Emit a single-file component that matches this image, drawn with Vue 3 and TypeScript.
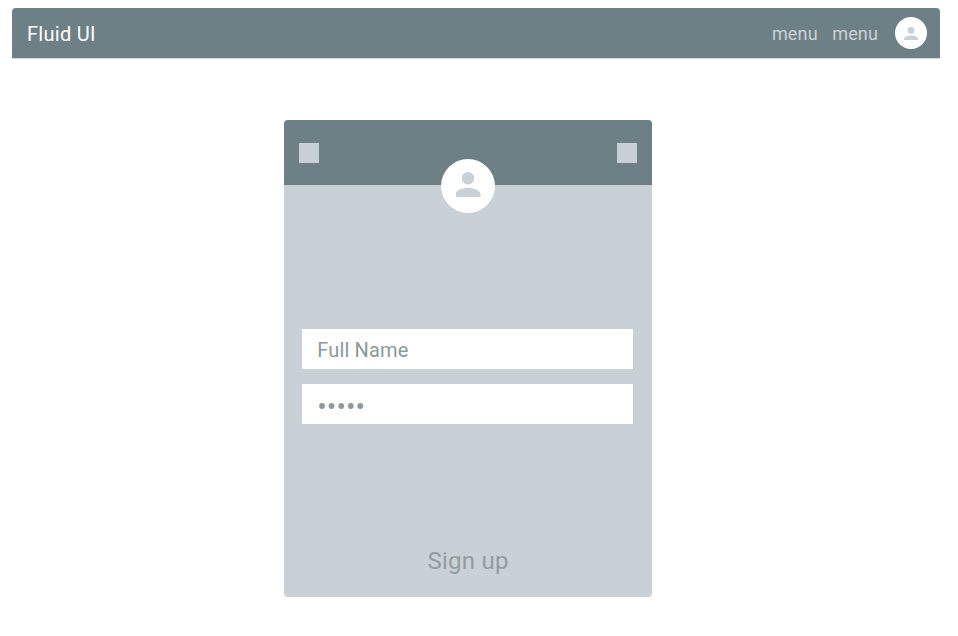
<script setup lang="ts">
import { ref } from 'vue'

const menuItems: string[] = ['menu', 'menu']
const fullName = ref('')
const password = ref('fluid')
</script>

<template>
  <div class="page">
    <header class="topbar">
      <div class="brand">Fluid UI</div>
      <nav class="menu">
        <a v-for="(item, index) in menuItems" :key="index" class="menu-item">{{ item }}</a>
      </nav>
      <div class="avatar avatar-small">
        <svg viewBox="0 0 16 16" preserveAspectRatio="none">
          <path d="M8 8a4 4 0 1 0 0-8 4 4 0 0 0 0 8zm0 2c-2.67 0-8 1.34-8 4v2h16v-2c0-2.66-5.33-4-8-4z" />
        </svg>
      </div>
    </header>

    <form class="card" @submit.prevent>
      <div class="card-head">
        <span class="square"></span>
        <div class="avatar avatar-large">
          <svg viewBox="0 0 16 16" preserveAspectRatio="none">
            <path d="M8 8a4 4 0 1 0 0-8 4 4 0 0 0 0 8zm0 2c-2.67 0-8 1.34-8 4v2h16v-2c0-2.66-5.33-4-8-4z" />
          </svg>
        </div>
        <span class="square"></span>
      </div>
      <div class="fields">
        <input v-model="fullName" class="field" type="text" placeholder="Full Name" />
        <input v-model="password" class="field password" type="password" />
      </div>
      <button class="submit" type="submit">Sign up</button>
    </form>
  </div>
</template>

<style>
body {
  background: #fff;
}
</style>

<style scoped>
.page {
  box-sizing: border-box;
  width: 958px;
  height: 636px;
  padding: 8.3px 18px 0 12px;
  font-family: Roboto, 'Liberation Sans', sans-serif;
}

.topbar {
  box-sizing: border-box;
  display: flex;
  align-items: center;
  height: 50px;
  padding: 0 13px 0 15px;
  background: #6d8085;
  border-radius: 4px 4px 0 0;
  box-shadow: 0 1px 0 #d3d9da;
}

.brand {
  padding-top: 2px;
  font-size: 20px;
  line-height: 24px;
  letter-spacing: 0.3px;
  color: #fff;
}

.menu {
  display: flex;
  gap: 14.5px;
  margin-left: auto;
  margin-right: 17px;
  padding-top: 2px;
}

.menu-item {
  font-size: 18px;
  line-height: 24px;
  letter-spacing: 0.15px;
  color: #c9d1d7;
}

.avatar {
  display: flex;
  align-items: center;
  justify-content: center;
  flex: none;
  background: #fff;
  border-radius: 50%;
}

.avatar path {
  fill: #c9d1d7;
}

.avatar-small {
  width: 32px;
  height: 32px;
}

.avatar-small svg {
  width: 14px;
  height: 13.5px;
}

.avatar-large {
  width: 54.5px;
  height: 54.5px;
  margin-top: 66.5px;
}

.avatar-large svg {
  width: 26px;
  height: 25px;
  padding: 0 0.5px;
  box-sizing: border-box;
  margin-bottom: 2px;
}

.card {
  display: flex;
  flex-direction: column;
  width: 368px;
  height: 477px;
  margin: 62px 0 0 272px;
  background: #c9d1d7;
  border-radius: 4px;
}

.card-head {
  box-sizing: border-box;
  display: flex;
  align-items: center;
  justify-content: space-between;
  height: 64.7px;
  padding: 0 15px;
  background: #6d8085;
  border-radius: 4px 4px 0 0;
}

.square {
  width: 20px;
  height: 20px;
  background: #c9d1d7;
}

.fields {
  display: flex;
  flex-direction: column;
  gap: 15px;
  margin: 144px 19px 0 18.3px;
}

.field {
  box-sizing: border-box;
  width: 100%;
  height: 40px;
  padding: 2px 15px 0;
  border: 0;
  border-radius: 0;
  outline: 0;
  background: #fff;
  color: #8b9999;
  font-family: inherit;
  font-size: 20px;
  letter-spacing: 0.15px;
}

.field::placeholder {
  color: #8b9999;
  opacity: 1;
}

.password {
  padding-top: 5px;
  font-size: 28px;
  letter-spacing: 0.1px;
}

.submit {
  margin: auto auto 20px;
  padding: 0;
  border: 0;
  background: none;
  color: #929d9f;
  font-family: inherit;
  font-size: 24px;
  line-height: 32px;
  letter-spacing: 0.25px;
}
</style>
